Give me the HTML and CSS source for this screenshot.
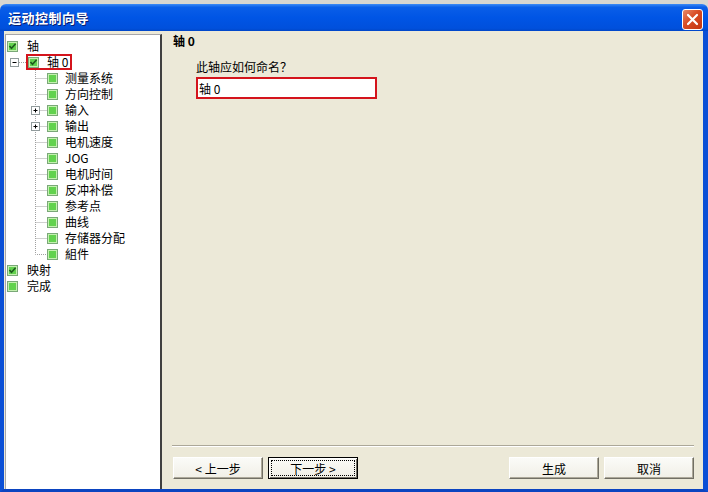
FILE: index.html
```html
<!DOCTYPE html>
<html lang="zh-CN">
<head>
    <meta charset="UTF-8">
    <title>运动控制向导</title>
    <link rel="stylesheet" href="styles.css">
</head>
<body>
    <div class="window">
        <div class="titlebar">
            <span class="title">运动控制向导</span>
            <div class="close">
                <svg width="13" height="13" viewBox="0 0 13 13"><path d="M2 2 L11 11 M11 2 L2 11" stroke="#fff" stroke-width="2.2" stroke-linecap="round"/></svg>
            </div>
        </div>
        <div class="frame">
            <div class="tree">
                <div class="row lvl0">
                    <svg class="chk" width="11" height="11" viewBox="0 0 11 11"><use href="#box"/><use href="#tick"/></svg>
                    <span class="label">轴</span>
                </div>
                <div class="row lvl1">
                    <svg class="stem" width="21" height="16" viewBox="0 0 21 16">
                        <path d="M13 8.5 H21" class="dots"/>
                        <rect x="4.5" y="4.5" width="8" height="8" class="exp"/>
                        <path d="M6.5 8.5 H10.5" class="sign"/>
                    </svg>
                    <span class="selected">
                        <svg class="chk" width="11" height="11" viewBox="0 0 11 11"><use href="#box"/><use href="#tick"/></svg>
                        <span class="label">轴 0</span>
                    </span>
                </div>
                <div class="row lvl2"><svg class="stem" width="17" height="16"><use href="#line"/></svg><svg class="chk" width="11" height="11"><use href="#box"/></svg><span class="label">测量系统</span></div>
                <div class="row lvl2"><svg class="stem" width="17" height="16"><use href="#line"/></svg><svg class="chk" width="11" height="11"><use href="#box"/></svg><span class="label">方向控制</span></div>
                <div class="row lvl2"><svg class="stem" width="17" height="16"><use href="#line"/><use href="#plus"/></svg><svg class="chk" width="11" height="11"><use href="#box"/></svg><span class="label">输入</span></div>
                <div class="row lvl2"><svg class="stem" width="17" height="16"><use href="#line"/><use href="#plus"/></svg><svg class="chk" width="11" height="11"><use href="#box"/></svg><span class="label">输出</span></div>
                <div class="row lvl2"><svg class="stem" width="17" height="16"><use href="#line"/></svg><svg class="chk" width="11" height="11"><use href="#box"/></svg><span class="label">电机速度</span></div>
                <div class="row lvl2"><svg class="stem" width="17" height="16"><use href="#line"/></svg><svg class="chk" width="11" height="11"><use href="#box"/></svg><span class="label">JOG</span></div>
                <div class="row lvl2"><svg class="stem" width="17" height="16"><use href="#line"/></svg><svg class="chk" width="11" height="11"><use href="#box"/></svg><span class="label">电机时间</span></div>
                <div class="row lvl2"><svg class="stem" width="17" height="16"><use href="#line"/></svg><svg class="chk" width="11" height="11"><use href="#box"/></svg><span class="label">反冲补偿</span></div>
                <div class="row lvl2"><svg class="stem" width="17" height="16"><use href="#line"/></svg><svg class="chk" width="11" height="11"><use href="#box"/></svg><span class="label">参考点</span></div>
                <div class="row lvl2"><svg class="stem" width="17" height="16"><use href="#line"/></svg><svg class="chk" width="11" height="11"><use href="#box"/></svg><span class="label">曲线</span></div>
                <div class="row lvl2"><svg class="stem" width="17" height="16"><use href="#line"/></svg><svg class="chk" width="11" height="11"><use href="#box"/></svg><span class="label">存储器分配</span></div>
                <div class="row lvl2"><svg class="stem" width="17" height="16"><use href="#last"/></svg><svg class="chk" width="11" height="11"><use href="#box"/></svg><span class="label">組件</span></div>
                <div class="row lvl0">
                    <svg class="chk" width="11" height="11"><use href="#box"/><use href="#tick"/></svg>
                    <span class="label">映射</span>
                </div>
                <div class="row lvl0">
                    <svg class="chk" width="11" height="11"><use href="#box"/></svg>
                    <span class="label">完成</span>
                </div>
            </div>

            <div class="main">
                <div class="heading">轴 0</div>
                <div class="question">
                    <label for="axis-name">此轴应如何命名？</label>
                    <input type="text" id="axis-name" value="轴 0">
                </div>
                <div class="fill"></div>
                <div class="sep"></div>
                <div class="buttons">
                    <div class="btn-group">
                        <button class="btn">&lt; 上一步</button>
                        <button class="btn default"><span class="focus">下一步 &gt;</span></button>
                    </div>
                    <div class="btn-group">
                        <button class="btn">生成</button>
                        <button class="btn">取消</button>
                    </div>
                </div>
            </div>
        </div>
    </div>

    <svg width="0" height="0" class="defs">
        <defs>
            <g id="box">
                <rect x="0.5" y="0.5" width="10" height="10" fill="#c4f0b0" stroke="#7aa878"/>
                <rect x="2" y="2" width="7" height="7" fill="#62d24e"/>
            </g>
            <path id="tick" d="M2.5 5 L4.5 7.3 L8.6 2.8" fill="none" stroke="#1d5a1d" stroke-width="1.6"/>
            <g id="line">
                <path d="M5.5 0 V16 M5.5 8.5 H17" fill="none" stroke="#a0a0a0" stroke-dasharray="1 1"/>
            </g>
            <g id="last">
                <path d="M5.5 0 V8.5 H17" fill="none" stroke="#a0a0a0" stroke-dasharray="1 1"/>
            </g>
            <g id="plus">
                <rect x="1.5" y="4.5" width="8" height="8" fill="#fff" stroke="#919b9c"/>
                <path d="M3.5 8.5 H7.5 M5.5 6.5 V10.5" stroke="#000"/>
            </g>
        </defs>
    </svg>
</body>
</html>
```

FILE: styles.css
```css
html, body{
    margin: 0;
    padding: 0;
}
body{
    width: 708px;
    height: 492px;
    overflow: hidden;
    background: #d8d6d0;
    font-family: "Noto Sans CJK SC", "Liberation Sans", sans-serif;
    font-size: 12px;
    color: #000;
}
.defs{
    position: absolute;
}
.window{
    margin-top: 4px;
    height: 488px;
    display: flex;
    flex-direction: column;
}
.titlebar{
    height: 27px;
    flex: none;
    display: flex;
    align-items: center;
    justify-content: space-between;
    padding: 0 5px 0 8px;
    border-radius: 6px 6px 0 0;
    background: linear-gradient(#3d8bf5 0%, #0a5ee8 12%, #0055e5 50%, #0050dc 90%, #0046c8 100%);
}
.title{
    color: #fff;
    font-weight: bold;
    font-size: 13px;
    text-shadow: 1px 1px 0 #0a1e6e;
    letter-spacing: 0.5px;
}
.close{
    width: 19px;
    height: 19px;
    margin-top: 4px;
    border: 1px solid #fff;
    border-radius: 3px;
    background: linear-gradient(135deg, #e88a6a 0%, #d84b24 45%, #c33510 100%);
    display: flex;
    align-items: center;
    justify-content: center;
}
.frame{
    flex: 1;
    display: flex;
    background: #ece9d8;
    border-left: 4px solid #0b4fd6;
    border-right: 5px solid #0b4fd6;
    border-bottom: 3px solid #0b44c0;
}
.tree{
    width: 154px;
    margin: 3px 0 0 1px;
    padding-top: 3px;
    background: #fff;
    border-top: 1px solid #a7a6aa;
    border-left: 1px solid #a7a6aa;
    border-right: 2px solid #404040;
}
.row{
    height: 16px;
    display: flex;
    align-items: center;
}
.row .chk{
    flex: none;
}
.label{
    white-space: nowrap;
    line-height: 14px;
}
.lvl0{
    padding-left: 1px;
}
.lvl0 .label{
    margin-left: 9px;
}
.lvl1 .stem{
    flex: none;
}
.dots{
    fill: none;
    stroke: #a0a0a0;
    stroke-dasharray: 1 1;
}
.exp{
    fill: #fff;
    stroke: #919b9c;
}
.sign{
    stroke: #000;
}
.selected{
    display: flex;
    align-items: center;
    height: 12px;
    padding: 0 2px 0 0;
    border: 2px solid #d4141c;
    margin-left: -1px;
}
.selected .label{
    margin-left: 8px;
}
.lvl2{
    padding-left: 24px;
}
.lvl2 .stem{
    flex: none;
}
.lvl2 .label{
    margin-left: 7px;
}
.main{
    flex: 1;
    display: flex;
    flex-direction: column;
    padding: 3px 9px 10px 10px;
}
.heading{
    font-weight: bold;
    padding-left: 1px;
    line-height: 14px;
}
.question{
    display: flex;
    flex-direction: column;
    padding-left: 24px;
    margin-top: 12px;
    gap: 3px;
}
.question label{
    line-height: 14px;
}
.question input{
    width: 176px;
    height: 18px;
    box-sizing: content-box;
    padding: 0 0 0 1px;
    margin: 0;
    border: 2px solid #d4141c;
    font-family: "Noto Sans CJK SC", "Liberation Sans", sans-serif;
    font-size: 12px;
    outline: none;
}
.fill{
    flex: 1;
}
.sep{
    height: 0;
    border-top: 1px solid #aca899;
    border-bottom: 1px solid #fff;
}
.buttons{
    margin-top: 10px;
    display: flex;
    justify-content: space-between;
}
.btn-group{
    display: flex;
    gap: 5px;
}
.btn-group:first-child{
    margin-left: 1px;
}
.btn{
    width: 90px;
    height: 22px;
    margin: 0;
    padding: 0;
    font-family: "Noto Sans CJK SC", "Liberation Sans", sans-serif;
    font-size: 12px;
    color: #000;
    background: linear-gradient(#fbfbf8, #f1efe6);
    border: 1px solid;
    border-color: #fff #716f64 #716f64 #fff;
    box-shadow: inset -1px -1px 0 #aca899;
}
.btn.default{
    border: 1px solid #000;
    box-shadow: inset 1px 1px 0 #fff, inset -1px -1px 0 #716f64;
    padding: 2px;
}
.focus{
    display: flex;
    height: 100%;
    align-items: center;
    justify-content: center;
    border: 1px dotted #000;
    box-sizing: border-box;
}
```
